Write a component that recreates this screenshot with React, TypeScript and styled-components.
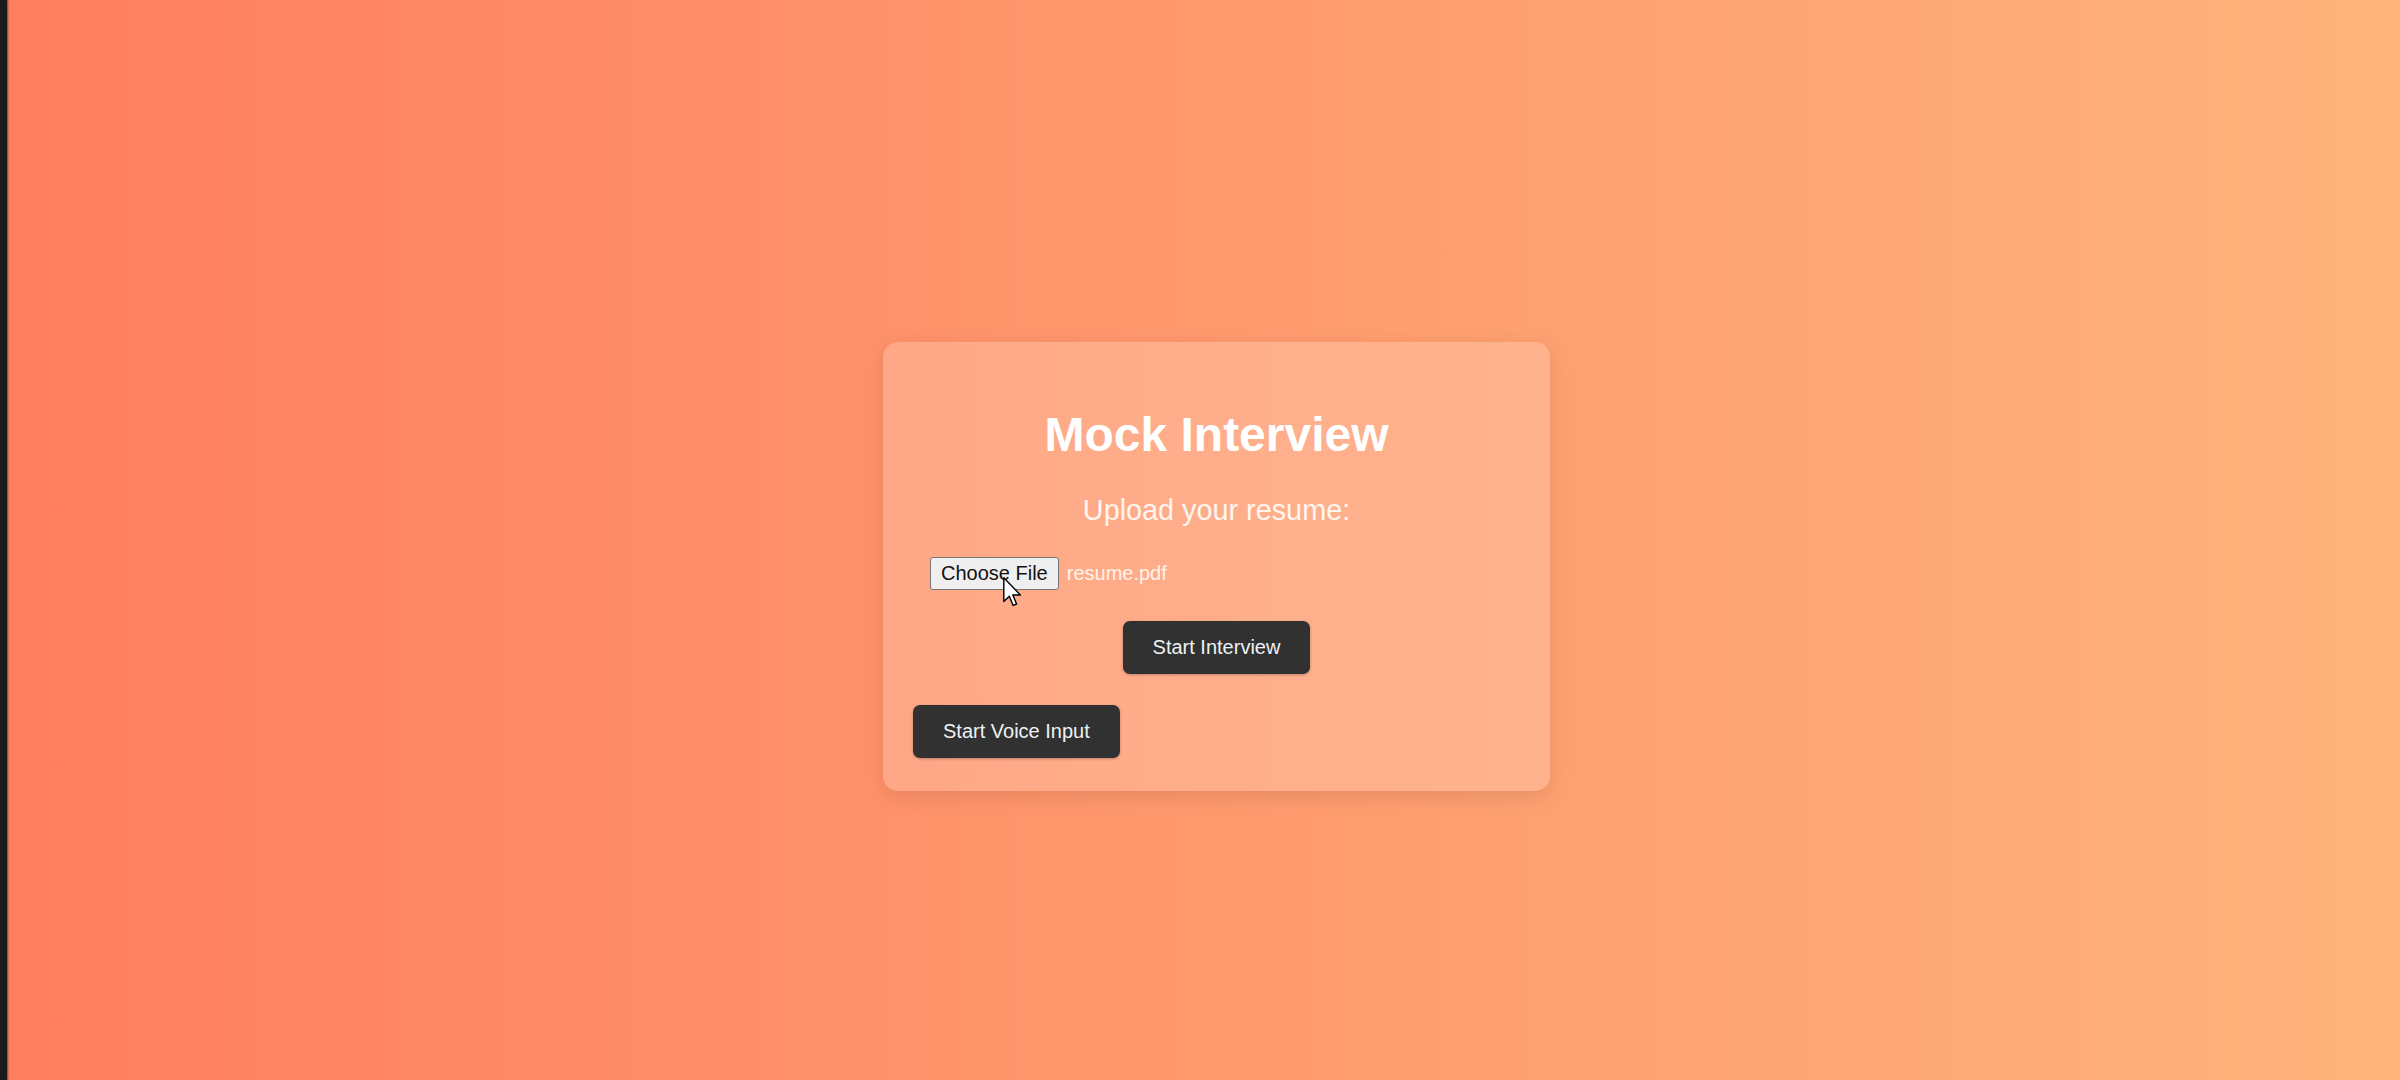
import React from "react";
import styled, { createGlobalStyle } from "styled-components";

const GlobalStyle = createGlobalStyle`
  html, body {
    margin: 0;
    padding: 0;
    height: 100%;
  }
  body {
    font-family: "Liberation Sans", Arial, sans-serif;
    overflow: hidden;
  }
  #root {
    height: 100%;
  }
`;

const Page = styled.div`
  display: flex;
  width: 2400px;
  height: 1080px;
`;

const EdgeStrip = styled.div`
  flex: 0 0 7px;
  background: #1b1b1b;
  box-shadow: 1px 0 2px rgba(0, 0, 0, 0.5);
  z-index: 1;
`;

const Stage = styled.main`
  flex: 1;
  display: flex;
  justify-content: center;
  align-items: center;
  padding: 52px 0 0 26px;
  box-sizing: border-box;
  background: linear-gradient(to right, #ff7e5f, #feb47b);
`;

const Card = styled.section`
  width: 667px;
  box-sizing: border-box;
  padding: 32px 30px 33px;
  display: flex;
  flex-direction: column;
  align-items: center;
  background: rgba(255, 255, 255, 0.2);
  border-radius: 15px;
  box-shadow: 0 6px 22px rgba(0, 0, 0, 0.1);
  color: #ffffff;
`;

const Title = styled.h1`
  margin: 33px 0 0;
  font-size: 48px;
  line-height: 55px;
  font-weight: 700;
  color: #ffffff;
`;

const Prompt = styled.p`
  margin: 32px 0 0;
  font-size: 28.8px;
  line-height: 33px;
  color: #fff6f0;
`;

const PickerRow = styled.div`
  position: relative;
  align-self: flex-start;
  display: flex;
  align-items: center;
  gap: 8px;
  margin: 30px 0 0 17px;
`;

const ChooseButton = styled.button`
  height: 33px;
  box-sizing: border-box;
  padding: 0 10px;
  font-family: "Liberation Sans", Arial, sans-serif;
  font-size: 20px;
  color: #111111;
  background: #efefef;
  border: 1.5px solid #767676;
  border-radius: 3px;
`;

const FileName = styled.span`
  font-size: 20px;
  color: #fff3ea;
`;

const Cursor = styled.svg`
  position: absolute;
  left: 73px;
  top: 20px;
  width: 19px;
  height: 30px;
`;

const ActionButton = styled.button<{ $align: "center" | "flex-start" }>`
  align-self: ${(p) => p.$align};
  margin-top: 31px;
  padding: 15px 30px;
  font-family: "Liberation Sans", Arial, sans-serif;
  font-size: 20px;
  line-height: 23px;
  color: #eef1f5;
  background: #313131;
  border: none;
  border-radius: 7px;
  box-shadow: 0 1px 3px rgba(0, 0, 0, 0.25);
`;

export default function App() {
  return (
    <>
      <GlobalStyle />
      <Page>
        <EdgeStrip />
        <Stage>
          <Card>
            <Title>Mock Interview</Title>
            <Prompt>Upload your resume:</Prompt>
            <PickerRow>
              <ChooseButton type="button">Choose File</ChooseButton>
              <FileName>resume.pdf</FileName>
              <Cursor viewBox="0 0 12 19">
                <path
                  d="M0.5 0.5 L0.5 15.5 L4 12.2 L6.4 18 L8.6 17.1 L6.2 11.4 L11 11.4 Z"
                  fill="#ffffff"
                  stroke="#000000"
                  strokeWidth="0.9"
                  strokeLinejoin="round"
                />
              </Cursor>
            </PickerRow>
            <ActionButton $align="center">Start Interview</ActionButton>
            <ActionButton $align="flex-start">Start Voice Input</ActionButton>
          </Card>
        </Stage>
      </Page>
    </>
  );
}
